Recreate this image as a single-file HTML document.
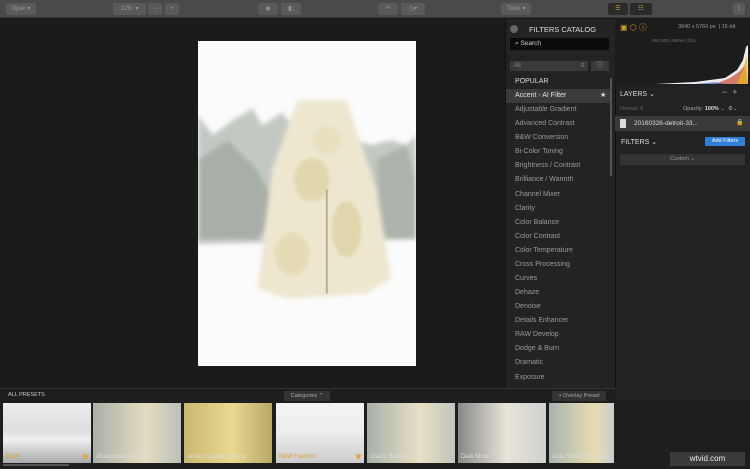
<!DOCTYPE html>
<html><head><meta charset="utf-8"><style>
*{margin:0;padding:0;box-sizing:border-box}
body{width:750px;height:469px;overflow:hidden;background:#1b1b1b;font-family:"Liberation Sans",sans-serif;position:relative;color:#bbb}
.abs{position:absolute}
.btn{position:absolute;background:#5a5a5a;border-radius:2px;height:12px;top:3px;font-size:6px;color:#999;line-height:12px;text-align:center}
.fl{position:absolute;left:515px;font-size:7px;color:#9a9a9a}
.th{position:absolute;top:403px;height:60px;overflow:hidden}
.th span{position:absolute;left:3px;bottom:3px;font-size:6px;color:#ddd}
</style></head><body>
<div class="abs" style="left:0;top:0;width:750px;height:18px;background:#4a4a4a;border-bottom:1px solid #333"></div>
<div class="btn" style="left:6px;width:30px">Open ▾</div>
<div class="btn" style="left:113px;width:33px">11% &nbsp;▾</div>
<div class="btn" style="left:148px;width:14px">−</div>
<div class="btn" style="left:165px;width:14px">+</div>
<div class="btn" style="left:258px;width:20px">◉</div>
<div class="btn" style="left:281px;width:20px">◧</div>
<div class="btn" style="left:378px;width:20px">↶</div>
<div class="btn" style="left:401px;width:24px">◷▾</div>
<div class="btn" style="left:501px;width:30px">Tools ▾</div>
<div class="btn" style="left:608px;width:20px;background:#2a2a2a;color:#d4a32a">☰</div>
<div class="btn" style="left:630px;width:22px;background:#2a2a2a;color:#d4a32a">☷</div>
<div class="btn" style="left:733px;width:12px">⇪</div>

<svg class="abs" style="left:198px;top:40px" width="218" height="327" viewBox="0 0 220 328">
<defs><filter id="b"><feGaussianBlur stdDeviation="2.5"/></filter><filter id="b2"><feGaussianBlur stdDeviation="1.5"/></filter></defs>
<rect width="220" height="328" fill="#fbfbfb"/>
<g filter="url(#b)">
<path d="M0 75 L15 95 L35 80 L55 68 L65 85 L85 72 L105 100 L120 110 L160 100 L175 105 L195 100 L210 105 L220 95 L220 200 L0 205Z" fill="#c3c9c2"/>
<path d="M0 120 L30 100 L60 130 L80 170 L60 200 L0 200Z" fill="#a7afa7"/>
<path d="M180 120 L210 105 L220 140 L220 200 L185 200Z" fill="#adb4ac"/>
<path d="M75 130 L100 60 L150 60 L180 150 L195 240 L170 255 L90 260 L60 250 Z" fill="#ede7cf"/>
</g>
<g filter="url(#b2)" opacity=".7">
<ellipse cx="115" cy="140" rx="18" ry="22" fill="#ddd1a2"/>
<ellipse cx="150" cy="190" rx="15" ry="28" fill="#dccf9c"/>
<ellipse cx="95" cy="215" rx="18" ry="22" fill="#e2d8ae"/>
<ellipse cx="130" cy="100" rx="14" ry="14" fill="#e6ddb8"/>
</g>
<rect x="129" y="150" width="2" height="105" fill="#b8ae98"/>
</svg>

<div class="abs" style="left:505px;top:19px;width:110px;height:369px;background:#232323;border-left:1px solid #111"></div>
<div class="abs" style="left:510px;top:25px;width:8px;height:8px;border-radius:50%;background:#666"></div>
<div class="abs" style="left:529px;top:25px;font-size:7.5px;color:#ddd">FILTERS CATALOG</div>
<div class="abs" style="left:510px;top:38px;width:99px;height:12px;background:#0c0c0c;font-size:6.5px;color:#ccc;line-height:12px;padding-left:5px">⌕ Search</div>
<div class="abs" style="left:510px;top:61px;width:78px;height:10px;background:#3a3a3a;font-size:6px;color:#888;line-height:10px;padding-left:4px">All<span style="float:right;padding-right:3px">⇕</span></div>
<div class="abs" style="left:591px;top:61px;width:18px;height:10px;background:#3a3a3a;font-size:7px;color:#aaa;line-height:10px;text-align:center">ⓘ</div>
<div class="abs" style="left:515px;top:78px;font-size:7px;color:#ddd">POPULAR</div>
<div class="abs" style="left:506px;top:89px;width:105px;height:14px;background:#3b3b3b"></div>
<div class="fl" style="top:92px;color:#e6e6e6">Accent - AI Filter</div>
<div class="abs" style="left:600px;top:91px;font-size:7px;color:#ddd">★</div>
<div class="fl" style="top:106px">Adjustable Gradient</div>
<div class="fl" style="top:120px">Advanced Contrast</div>
<div class="fl" style="top:134px">B&amp;W Conversion</div>
<div class="fl" style="top:148px">Bi-Color Toning</div>
<div class="fl" style="top:162px">Brightness / Contrast</div>
<div class="fl" style="top:176px">Brilliance / Warmth</div>
<div class="fl" style="top:191px">Channel Mixer</div>
<div class="fl" style="top:205px">Clarity</div>
<div class="fl" style="top:219px">Color Balance</div>
<div class="fl" style="top:233px">Color Contrast</div>
<div class="fl" style="top:247px">Color Temperature</div>
<div class="fl" style="top:261px">Cross Processing</div>
<div class="fl" style="top:275px">Curves</div>
<div class="fl" style="top:289px">Dehaze</div>
<div class="fl" style="top:303px">Denoise</div>
<div class="fl" style="top:317px">Details Enhancer</div>
<div class="fl" style="top:331px">RAW Develop</div>
<div class="fl" style="top:345px">Dodge &amp; Burn</div>
<div class="fl" style="top:359px">Dramatic</div>
<div class="fl" style="top:374px">Exposure</div>
<div class="abs" style="left:610px;top:78px;width:2px;height:98px;background:#555"></div>

<div class="abs" style="left:615px;top:19px;width:135px;height:369px;background:#222;border-left:1px solid #111"></div>
<div class="abs" style="left:615px;top:19px;width:135px;height:66px;background:#1c1c1c"></div>
<div class="abs" style="left:620px;top:22px;font-size:8px;color:#d4a32a">▣ ⬡ ⓘ</div>
<div class="abs" style="left:678px;top:24px;font-size:5.5px;color:#999">3840 x 5760 px &nbsp;| 16-bit</div>
<div class="abs" style="left:652px;top:38px;font-size:4.5px;color:#777">ISO 200 | 50mm | f/11</div>
<svg class="abs" style="left:655px;top:45px" width="93" height="39"><path d="M0 39 L40 37 L70 33 L82 25 L88 15 L91 2 L93 0 L93 39Z" fill="#eee"/><path d="M60 39 L75 33 L85 26 L90 20 L93 39Z" fill="#c03010" opacity=".6"/><path d="M82 39 L88 25 L92 10 L93 39Z" fill="#e8b020" opacity=".8"/><path d="M40 39 L60 37 L70 39Z" fill="#3050d0" opacity=".6"/></svg>
<div class="abs" style="left:620px;top:90px;font-size:7px;color:#ddd">LAYERS ⌄</div>
<div class="abs" style="left:722px;top:87px;font-size:9px;color:#aaa">−&nbsp;&nbsp;+</div>
<div class="abs" style="left:620px;top:106px;font-size:5.5px;color:#666">Normal ⇕</div>
<div class="abs" style="left:683px;top:106px;font-size:5.5px;color:#aaa">Opacity: <b style="color:#ddd">100%</b> ⌄ &nbsp;⚙⌄</div>
<div class="abs" style="left:615px;top:116px;width:135px;height:15px;background:#3a3a3a"></div>
<div class="abs" style="left:620px;top:119px;width:6px;height:9px;background:#ddd"></div>
<div class="abs" style="left:634px;top:120px;font-size:6.5px;color:#ddd">20160326-detroit-33...</div>
<div class="abs" style="left:736px;top:119px;font-size:6px;color:#aaa">🔒</div>
<div class="abs" style="left:621px;top:138px;font-size:7px;color:#ddd">FILTERS ⌄</div>
<div class="abs" style="left:705px;top:137px;width:40px;height:9px;background:#2f7fd8;border-radius:1px;font-size:5.5px;color:#fff;text-align:center;line-height:9px">Add Filters</div>
<div class="abs" style="left:620px;top:154px;width:125px;height:11px;background:#333;font-size:5.5px;color:#999;text-align:center;line-height:11px">Custom ⌄</div>

<div class="abs" style="left:0;top:388px;width:750px;height:81px;background:#1e1e1e;border-top:1px solid #333"></div>
<div class="abs" style="left:615px;top:388px;width:135px;height:12px;background:#222"></div>
<div class="abs" style="left:8px;top:392px;font-size:5.5px;color:#ccc">ALL PRESETS</div>
<div class="abs" style="left:284px;top:391px;width:46px;height:10px;background:#333;font-size:5.5px;color:#aaa;text-align:center;line-height:10px">Categories ⌃</div>
<div class="abs" style="left:552px;top:391px;width:54px;height:10px;background:#333;font-size:5.5px;color:#aaa;text-align:center;line-height:10px">+ Overlay Preset</div>
<div class="th" style="left:3px;width:88px;background:linear-gradient(#eee,#ddd 45%,#f0f0f0 60%,#aaa)"><span style="color:#e0a030">B&amp;W</span><b style="position:absolute;right:2px;bottom:2px;color:#e8a030;font-size:8px">★</b></div>
<div class="th" style="left:93px;width:88px;background:linear-gradient(90deg,#aab0a8,#e4dcc0 60%,#bcc0b8)"><span>Abandoned Place</span></div>
<div class="th" style="left:184px;width:88px;background:linear-gradient(90deg,#c8b870,#e8d890 55%,#b8a868)"><span>Artistic Copper Strong</span></div>
<div class="th" style="left:276px;width:88px;background:linear-gradient(#f4f4f4,#ececec,#ccc)"><span style="color:#e0a030">B&amp;W Fashion</span><b style="position:absolute;right:2px;bottom:2px;color:#e8a030;font-size:8px">★</b></div>
<div class="th" style="left:367px;width:88px;background:linear-gradient(90deg,#a8b0a8,#e8e0c4 60%,#c0c4bc)"><span>Clarity Booster</span></div>
<div class="th" style="left:458px;width:88px;background:linear-gradient(90deg,#888,#e8e4d8 55%,#d0d0d0)"><span>Dark Moon</span></div>
<div class="th" style="left:549px;width:65px;background:linear-gradient(90deg,#a8b4b0,#e8dcb0 70%,#ccc)"><span>Auto Smart Enhancer</span></div>
<div class="abs" style="left:3px;top:464px;width:66px;height:2px;background:#555"></div>
<div class="abs" style="left:670px;top:452px;width:75px;height:14px;background:#3a3a3a;font-size:8px;color:#eee;line-height:14px;text-align:center">wtvid.com</div>
</body></html>
